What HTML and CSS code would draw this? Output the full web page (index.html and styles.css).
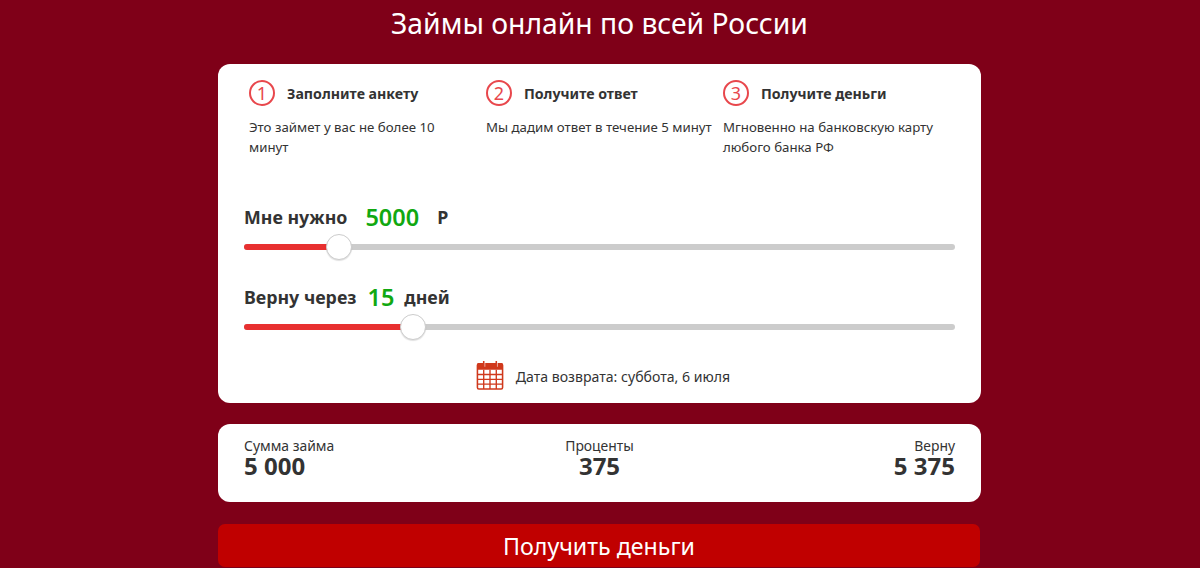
FILE: index.html
```html
<!DOCTYPE html>
<html lang="ru">
<head>
  <meta charset="UTF-8" />
  <title>Займы онлайн</title>
  <link rel="stylesheet" href="styles.css">
</head>
<body>
  <div class="container">
    <h1>Займы онлайн по всей России</h1>

    <section class="card calc">
      <div class="steps">
        <div class="step">
          <div class="step-head"><span class="step-num">1</span><b>Заполните анкету</b></div>
          <p>Это займет у вас не более 10<br>минут</p>
        </div>
        <div class="step">
          <div class="step-head"><span class="step-num">2</span><b>Получите ответ</b></div>
          <p>Мы дадим ответ в течение 5 минут</p>
        </div>
        <div class="step">
          <div class="step-head"><span class="step-num">3</span><b>Получите деньги</b></div>
          <p>Мгновенно на банковскую карту<br>любого банка РФ</p>
        </div>
      </div>

      <div class="field field-sum">
        <div class="field-label">Мне нужно <span class="value value-sum">5000</span> <span class="unit">Р</span></div>
        <div class="slider">
          <div class="slider-fill" style="width: 95px"></div>
          <div class="slider-thumb"></div>
        </div>
      </div>

      <div class="field field-days">
        <div class="field-label">Верну через <span class="value value-days">15</span> дней</div>
        <div class="slider">
          <div class="slider-fill" style="width: 169px"></div>
          <div class="slider-thumb"></div>
        </div>
      </div>

      <div class="return-date">
        <svg class="calendar" width="28" height="30" viewBox="0 0 28 31" fill="none">
          <rect x="1" y="4" width="26" height="26" rx="1.5" fill="#fff" stroke="#d0391c" stroke-width="1.6"/>
          <path d="M1 4.5a1.5 1.5 0 0 1 1.5-1.5h23a1.5 1.5 0 0 1 1.5 1.5V10H1z" fill="#d0391c"/>
          <path d="M7.5 1v6M20.5 1v6" stroke="#d0391c" stroke-width="1.6"/>
          <path d="M8.7 3v4M21.7 3v4" stroke="#fff" stroke-width="0.6"/>
          <path d="M1 15h26M1 20h26M1 25h26M7.5 10v20M14 10v20M20.5 10v20" stroke="#d0391c" stroke-width="1.4"/>
        </svg>
        <span>Дата возврата: суббота, 6 июля</span>
      </div>
    </section>

    <section class="card totals">
      <div class="total">
        <span>Сумма займа</span>
        <b>5 000</b>
      </div>
      <div class="total total-center">
        <span>Проценты</span>
        <b>375</b>
      </div>
      <div class="total total-right">
        <span>Верну</span>
        <b>5 375</b>
      </div>
    </section>

    <button class="submit">Получить деньги</button>
  </div>
</body>
</html>
```

FILE: styles.css
```css
* {
  margin: 0;
  padding: 0;
  box-sizing: border-box;
}

body {
  background: #7f0018;
  color: #333;
  font-family: "Noto Sans", sans-serif;
  overflow: hidden;
}

.container {
  width: 763px;
  margin-left: 218px;
}

h1 {
  height: 64px;
  padding-top: 3px;
  color: #fff;
  font-size: 28.3px;
  font-weight: 400;
  line-height: 40px;
  text-align: center;
}

.card {
  background: #fff;
  border-radius: 12px;
}

.calc {
  height: 339px;
  padding: 16px 26px 0;
}

/* steps */
.steps {
  display: flex;
  height: 121px;
  margin-right: -12px;
  padding-left: 5px;
}

.step {
  flex: 0 0 237px;
}

.step-head {
  display: flex;
  align-items: center;
  gap: 12px;
  height: 26px;
  font-size: 14.2px;
}

.step-num {
  width: 26px;
  height: 26px;
  border: 2px solid #e8474c;
  border-radius: 50%;
  color: #e8474c;
  font-size: 18px;
  line-height: 22px;
  text-align: center;
}

.step p {
  margin-top: 11px;
  font-size: 13.25px;
  line-height: 20px;
  white-space: nowrap;
}

/* sliders */
.field {
  height: 80px;
}

.field-label {
  display: flex;
  align-items: center;
  height: 32px;
  font-size: 17.8px;
  font-weight: 700;
}

.value {
  color: #11a811;
  font-size: 23.5px;
  font-weight: 600;
}

.value-sum {
  margin: 0 18px;
}

.value-days {
  margin: 0 10px 0 11px;
}

.slider {
  position: relative;
  height: 6px;
  margin-top: 11px;
  background: #ccc;
  border-radius: 3px;
}

.slider-fill {
  height: 6px;
  background: #e83030;
  border-radius: 3px 0 0 3px;
}

.slider-thumb {
  position: absolute;
  top: -10px;
  width: 26px;
  height: 26px;
  margin-left: -13px;
  background: #fff;
  border: 1px solid #ccc;
  border-radius: 50%;
  box-shadow: 0 1px 1px rgba(0,0,0,0.12);
}

.field-sum .slider-thumb {
  left: 95px;
}

.field-days .slider-thumb {
  left: 169px;
}

.return-date {
  display: flex;
  align-items: center;
  justify-content: center;
  gap: 12px;
  height: 30px;
  padding-left: 7px;
  font-size: 14.1px;
}

.calendar {
  margin-top: -2px;
}

/* totals */
.totals {
  display: flex;
  justify-content: space-between;
  height: 78px;
  margin-top: 21px;
  padding: 14px 26px 0;
}

.total {
  display: flex;
  flex-direction: column;
  width: 200px;
  font-size: 13.9px;
  line-height: 16px;
}

.total b {
  margin-top: -1px;
  font-size: 24px;
  font-weight: 700;
  line-height: 26px;
}

.total-center {
  align-items: center;
}

.total-right {
  align-items: flex-end;
}

.submit {
  display: block;
  width: 762px;
  height: 43px;
  margin-top: 22px;
  padding-top: 1px;
  background: #c00000;
  border: none;
  border-radius: 7px;
  color: #fff;
  font-family: inherit;
  font-size: 23.2px;
  line-height: 42px;
}
```
